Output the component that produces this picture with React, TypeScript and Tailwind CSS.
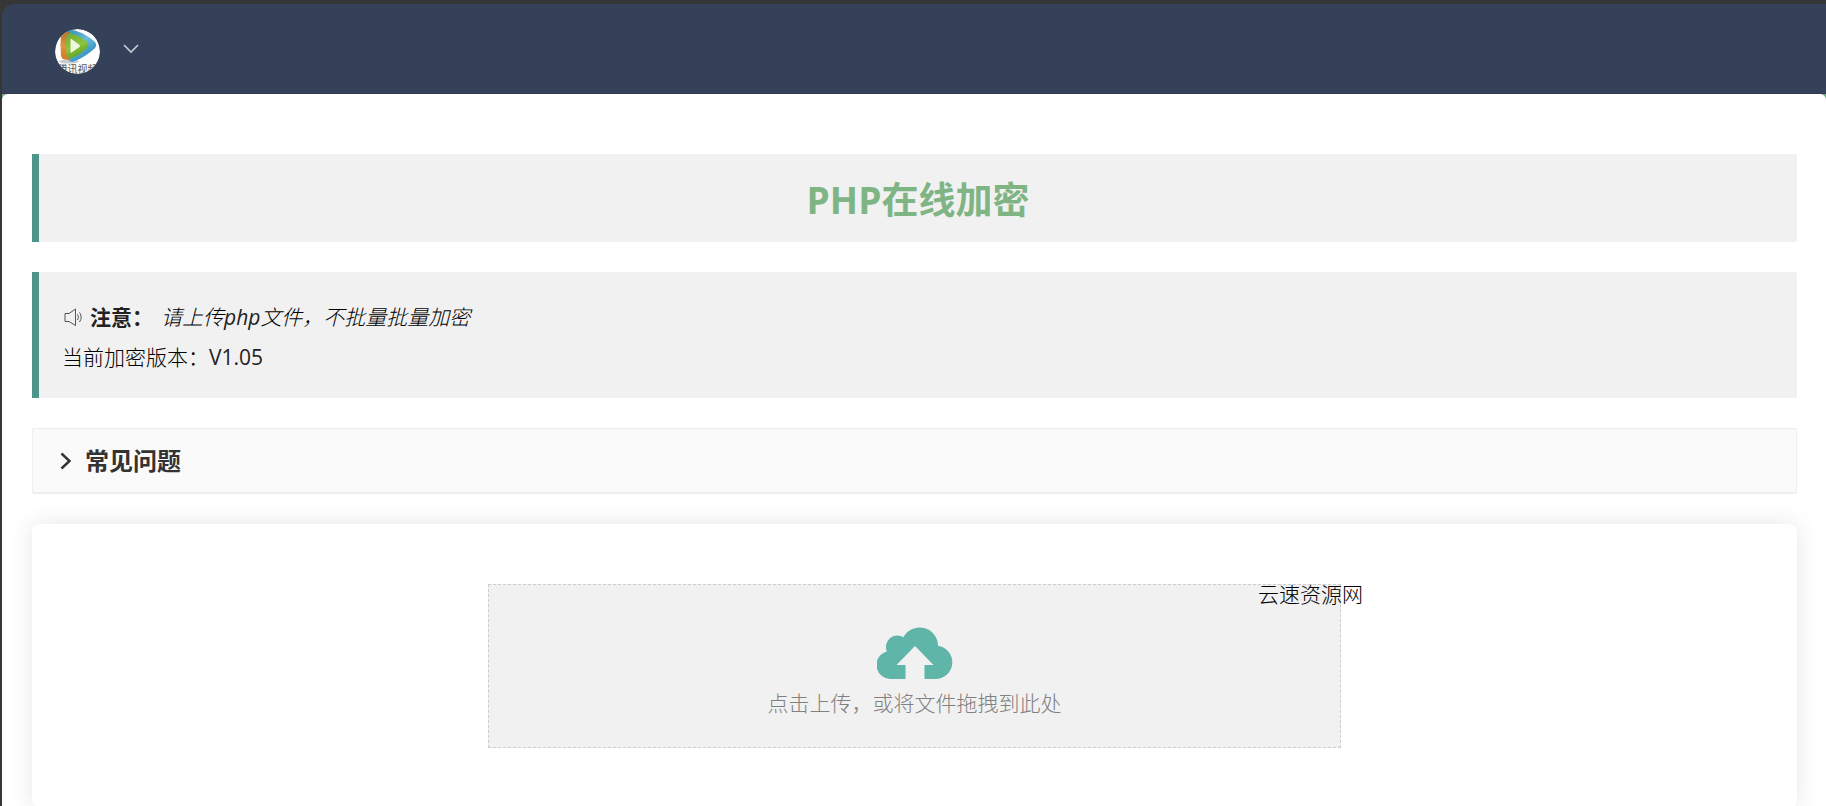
import React, { useState } from "react";

function Logo() {
  return (
    <svg viewBox="0 0 45 45" className="size-[45px] rounded-full" aria-hidden="true">
      <defs>
        <linearGradient id="blue" x1="0" y1="0" x2="0.6" y2="1">
          <stop offset="0" stopColor="#2f8fb4" />
          <stop offset="0.5" stopColor="#6cbbdc" />
          <stop offset="1" stopColor="#2787b8" />
        </linearGradient>
        <linearGradient id="orange" x1="0" y1="0" x2="0" y2="1">
          <stop offset="0" stopColor="#b9702c" />
          <stop offset="0.5" stopColor="#e3923f" />
          <stop offset="1" stopColor="#d07a22" />
        </linearGradient>
        <linearGradient id="green" x1="0" y1="0" x2="0.4" y2="1">
          <stop offset="0" stopColor="#6fa836" />
          <stop offset="0.6" stopColor="#8cc63c" />
          <stop offset="1" stopColor="#5da023" />
        </linearGradient>
        <clipPath id="disc">
          <circle cx="22.5" cy="22.5" r="22.5" />
        </clipPath>
      </defs>
      <g clipPath="url(#disc)">
        <rect width="45" height="45" fill="#fdfdfd" />
        <ellipse cx="14" cy="32.5" rx="10" ry="2" fill="#c9cccc" />
        <path d="M12 2.500Q14 0 20 1.500Q31 5 39.500 12.500Q43 16 39.500 19.500Q31 27.500 19 32.500Q14 34 13 29Z" fill="url(#blue)" />
        <path d="M6 6Q7 3 10 3L14 3V31L10 30.500Q6.500 30 6 26.500Q5 16 6 6Z" fill="url(#orange)" />
        <path d="M11.500 6Q13 3.500 17 4.700Q26 7.500 32 13Q34.500 16 32 19Q25 26 16.500 29Q12 30 11.500 25.500Q10.500 15 11.500 6Z" fill="url(#green)" />
        <path d="M15.500 10.500Q15.500 9.500 16.500 10L24.500 16Q25.500 17 24.500 18L16.500 23.500Q15.500 24 15.500 23Z" fill="#eef6e2" />
        <text x="22.5" y="43.500" textAnchor="middle" fontSize="10" fill="#555" fontFamily="'Noto Sans CJK SC', sans-serif">
          腾讯视频
        </text>
      </g>
    </svg>
  );
}

function SpeakerIcon() {
  return (
    <svg viewBox="0 0 18 18" className="size-[18px]" fill="none" stroke="#555" aria-hidden="true">
      <path d="M1 5.500H5L11.500 1V17.500L5 13.500H1Z" />
      <path d="M13.500 6.500Q15.500 9.200 13.500 12" />
      <path d="M15.500 4.500Q18.900 9.200 15.500 14" />
    </svg>
  );
}

function CloudUploadIcon() {
  return (
    <svg viewBox="0 0 76 52" className="h-[52px] w-[76px]" aria-hidden="true">
      <path
        fill="#5fb5a8"
        d="M14 52A14 14 0 0 1 9.800 24.500A11.500 11.500 0 0 1 26.500 10.300A18.300 18.300 0 0 1 61 18.800A16.700 16.700 0 0 1 59.500 52H47.500V38H56.500L38 19L19.500 38H28.500V52Z"
      />
    </svg>
  );
}

export default function App() {
  const [open, setOpen] = useState(false);
  return (
    <div className="min-h-screen bg-[#363636] pt-1 pl-0.5 font-['Open_Sans','Noto_Sans_CJK_SC',sans-serif] text-[21px] text-[#222]">
      <div className="rounded-tl-xl bg-[#354158]">
        <header className="flex h-[90px] items-center gap-[23px] rounded-tl-xl border-b border-[#323a50] pt-[5px] pl-[53px]">
          <Logo />
          <button type="button" aria-label="展开菜单" className="flex pb-1">
            <svg viewBox="0 0 16 10" className="h-2.5 w-4" fill="none" stroke="#c8ccd4" strokeWidth="1.6" aria-hidden="true">
              <path d="M1 1L8 8L15 1" />
            </svg>
          </button>
        </header>
        <div className="bg-[#75a987]">
          <main className="flex min-h-[712px] flex-col gap-[30px] rounded-t-md bg-white pt-[60px] pr-[29px] pl-[30px]">
            <h1 className="flex h-[88px] items-center justify-center rounded-r-xs border-l-[7px] border-[#4f9488] bg-[#f1f1f1] pt-1 text-[37px] font-bold text-[#7fb584]">
              PHP在线加密
            </h1>
            <section className="rounded-r-xs border-l-[7px] border-[#4f9488] bg-[#f1f1f1] px-[23px] pt-[25px] pb-[21px] leading-10">
              <p className="flex items-center">
                <span className="mr-2 ml-0.5">
                  <SpeakerIcon />
                </span>
                <strong className="mr-2">注意：</strong>
                <em className="font-light text-black">
                  请上传<span className="font-normal text-[#222]">php</span>文件，不批量批量加密
                </em>
              </p>
              <p className="font-light text-black">
                当前加密版本：<span className="font-normal text-[#222]">V1.05</span>
              </p>
            </section>
            <section className="rounded-xs border border-b-2 border-[#eee] bg-[#fafafa]">
              <h2>
                <button
                  type="button"
                  aria-expanded={open}
                  onClick={() => setOpen(!open)}
                  className="flex h-[63px] w-full items-center gap-[13px] pl-[27px] text-2xl font-bold text-[#333]"
                >
                  <svg viewBox="0 0 12 18" className="h-[18px] w-3" fill="none" stroke="#333" strokeWidth="2.4" aria-hidden="true">
                    <path d="M1.500 1.500L9.500 9L1.500 16.500" />
                  </svg>
                  常见问题
                </button>
              </h2>
            </section>
            <section className="rounded-lg bg-white px-4 py-[60px] shadow-[0_0_24px_rgba(0,0,0,0.1)]">
              <div className="relative mx-auto w-full max-w-[853px]">
                <button
                  type="button"
                  className="flex h-[164px] w-full flex-col items-center border border-dashed border-[#ccc] bg-[#f1f1f1] pt-[42px] font-light text-[#808080]"
                >
                  <CloudUploadIcon />
                  <span className="mt-2 leading-8">点击上传，或将文件拖拽到此处</span>
                </button>
                <span className="absolute top-0 -right-[22px] leading-5 font-light text-black">云速资源网</span>
              </div>
            </section>
          </main>
        </div>
      </div>
    </div>
  );
}
